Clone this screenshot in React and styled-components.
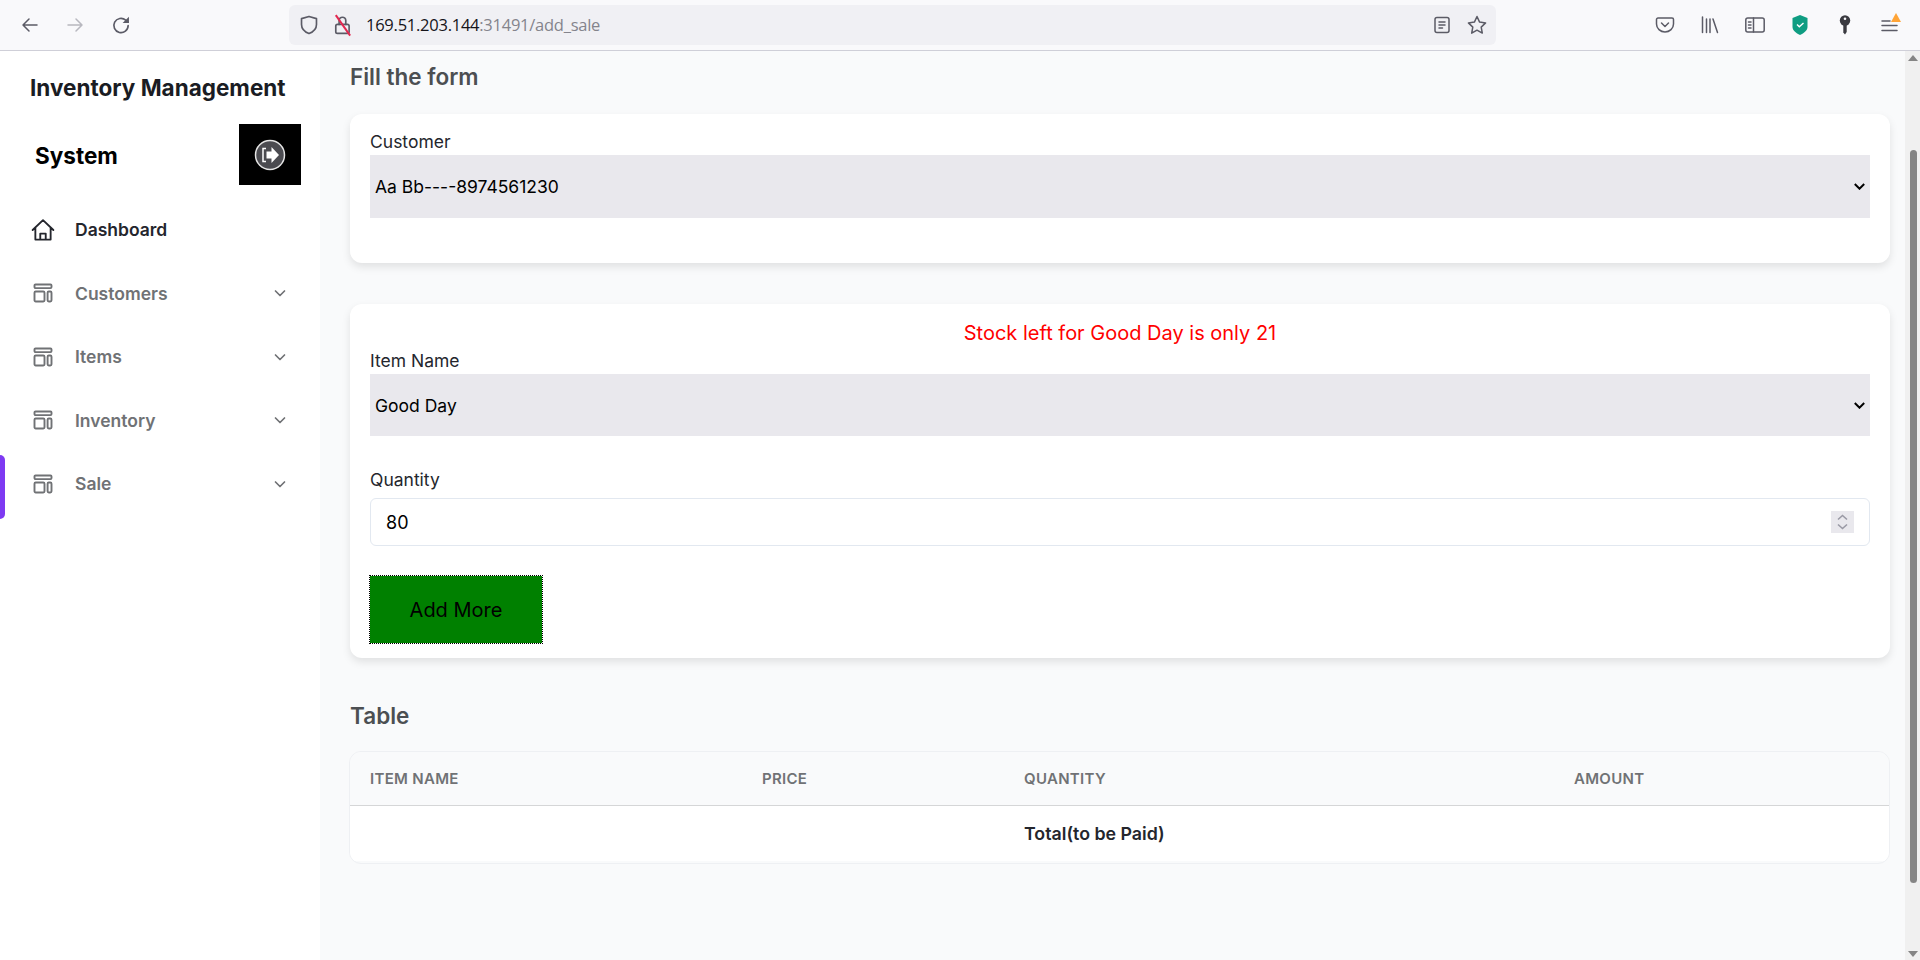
import React from 'react'
import styled, { createGlobalStyle } from 'styled-components'

const GlobalStyle = createGlobalStyle`
  html, body { margin: 0; padding: 0; height: 100%; overflow: hidden; }
  body { font-family: Inter, "Liberation Sans", sans-serif; background: #f9fafb; }
  * { box-sizing: border-box; }
`

function Ico({ size = 20, children, vb = '0 0 20 20', color = '#5b5b66', sw = 1.5 }) {
  return (
    <svg width={size} height={size} viewBox={vb} fill="none" stroke={color} strokeWidth={sw} strokeLinecap="round" strokeLinejoin="round">
      {children}
    </svg>
  )
}

function LayoutIcon() {
  return (
    <svg width="20" height="20" viewBox="0 0 20 20" fill="none" stroke="#707275" strokeWidth="1.9">
      <rect x="1.5" y="1.5" width="17" height="3.6" rx="1" />
      <rect x="1.5" y="8.5" width="10" height="10" rx="1.2" />
      <rect x="14.6" y="8.5" width="3.9" height="10" rx="1.2" />
    </svg>
  )
}

function Chevron() {
  return (
    <svg width="16" height="16" viewBox="0 0 16 16" fill="none" stroke="#707275" strokeWidth="1.7" strokeLinecap="round" strokeLinejoin="round">
      <path d="M3.5 6l4.5 4.5L12.5 6" />
    </svg>
  )
}

function SelectCaret() {
  return (
    <svg width="11" height="7" viewBox="0 0 11 7" fill="none" stroke="#000" strokeWidth="2">
      <path d="M.8 1l4.700 4.700L10.200 1" />
    </svg>
  )
}

const navItems = ['Customers', 'Items', 'Inventory', 'Sale']
const columns = [
  { label: 'ITEM NAME', w: 392 },
  { label: 'PRICE', w: 262 },
  { label: 'QUANTITY', w: 550 },
  { label: 'AMOUNT', w: 336 },
]

export default function App() {
  return (
    <Page>
      <GlobalStyle />
      <Toolbar>
        <NavButtons>
          <Ico size={20}><path d="M17 10H3.5M9 4l-6 6 6 6" /></Ico>
          <Ico size={20} color="#b8b8bf"><path d="M3 10h13.5M11 4l6 6-6 6" /></Ico>
          <Ico size={22} vb="0 0 20 20"><path d="M16.500 10.500a6.500 6.500 0 1 1-2.200-4.900L16.500 7.500" /><path d="M17.200 2.500v5.700h-5.700" fill="#5b5b66" stroke="none" /></Ico>
        </NavButtons>
        <UrlBar>
          <Ico size={22} vb="0 0 20 20"><path d="M10 2.200l6.800 2v5.300c0 4-3 6.800-6.800 8.300-3.800-1.500-6.800-4.300-6.800-8.300V4.200z" /></Ico>
          <LockWrap>
            <Ico size={20} vb="0 0 18 18"><rect x="2.500" y="8.500" width="12" height="8" rx="1.500" /><path d="M5.500 8.500V5a3 3 0 0 1 6 0v3.500" /></Ico>
            <Slash />
          </LockWrap>
          <UrlText>169.51.203.144<UrlDim>:31491/add_sale</UrlDim></UrlText>
          <UrlEnd>
            <Ico size={18} vb="0 0 18 18"><rect x="2" y="1.500" width="14" height="15" rx="2" /><path d="M6 6h6M6 9h6M6 12h3.500" /></Ico>
            <Ico size={22} vb="0 0 22 22"><path d="M11 2.500l2.600 5.600 6 .8-4.400 4.200 1.100 6L11 16.200 5.700 19.100l1.100-6L2.400 8.900l6-.8z" /></Ico>
          </UrlEnd>
        </UrlBar>
        <ToolIcons>
          <ToolSlot><Ico size={20}><path d="M3 3h14a1.500 1.500 0 0 1 1.500 1.500V9a8.500 8 0 0 1-17 0V4.500A1.500 1.500 0 0 1 3 3z" /><path d="M6.500 8l3.500 3.500L13.500 8" /></Ico></ToolSlot>
          <ToolSlot><Ico size={20}><path d="M2.500 2v15.500M6.500 4v13.500M10 4v13.500M13 4l4.500 13.500" /></Ico></ToolSlot>
          <ToolSlot><Ico size={20}><rect x=".8" y="3" width="18.400" height="14" rx="2" /><path d="M8.500 3v14M3.500 7h2.500M3.500 10h2.500M3.500 13h2.500" /></Ico></ToolSlot>
          <ToolSlot>
            <svg width="16" height="20" viewBox="0 0 16 20">
              <path d="M8 0l7.500 3v9c0 3.500-3.500 6-7.500 8-4-2-7.500-4.500-7.500-8V3z" fill="#0f9d82" />
              <path d="M5 9.500l2.300 2.200L11.500 8" fill="none" stroke="#fff" strokeWidth="1.400" />
            </svg>
          </ToolSlot>
          <ToolSlot>
            <svg width="12" height="20" viewBox="0 0 12 20">
              <circle cx="6" cy="5.500" r="5.200" fill="#3a3a40" />
              <circle cx="6" cy="3.800" r="1.300" fill="#f9f9fb" />
              <path d="M4.300 9h3.400v8L6 19.500 4.300 17.500z" fill="#3a3a40" />
            </svg>
          </ToolSlot>
          <ToolSlot>
            <MenuWrap>
              <Ico size={20} color="#5b5b66"><path d="M2 6h8M2 10.500h15M2 15.500h15" /></Ico>
              <MenuBadge />
            </MenuWrap>
          </ToolSlot>
        </ToolIcons>
      </Toolbar>

      <Body>
        <Sidebar>
          <Brand>Inventory Management</Brand>
          <BrandRow>
            <BrandSub>System</BrandSub>
            <LogoutBox>
              <svg width="32" height="32" viewBox="0 0 32 32">
                <circle cx="16" cy="16" r="14.500" fill="#4b4b50" stroke="#e5e5e5" strokeWidth="1.500" />
                <path d="M12 9.500H9v13h3" fill="none" stroke="#fff" strokeWidth="1.500" />
                <path d="M12.500 12.500h5V8l7.500 8-7.500 8v-4.500h-5z" fill="#fff" />
              </svg>
            </LogoutBox>
          </BrandRow>
          <NavList>
            <NavRow $dark>
              <Ico size={24} vb="0 0 22 22" color="#24262d" sw={1.7}>
                <path d="M1.500 11L11 2l9.500 9M4 8.800v11h14v-11M8.500 19.800v-5.500h5v5.500" />
              </Ico>
              <NavLabel $dark>Dashboard</NavLabel>
            </NavRow>
            {navItems.map((name, i) => (
              <NavRow key={name}>
                {i === navItems.length - 1 && <ActiveBar />}
                <LayoutIcon />
                <NavLabel>{name}</NavLabel>
                <ChevronSlot><Chevron /></ChevronSlot>
              </NavRow>
            ))}
          </NavList>
        </Sidebar>

        <Main>
          <Heading>Fill the form</Heading>
          <CustomerCard>
            <Label>Customer</Label>
            <FakeSelect>
              Aa Bb----8974561230
              <CaretSlot><SelectCaret /></CaretSlot>
            </FakeSelect>
          </CustomerCard>

          <ItemCard>
            <StockNote>Stock left for Good Day is only 21</StockNote>
            <ItemLabel>Item Name</ItemLabel>
            <FakeSelect $short>
              Good Day
              <CaretSlot><SelectCaret /></CaretSlot>
            </FakeSelect>
            <QuantityLabel>Quantity</QuantityLabel>
            <NumberField>
              80
              <Spinner>
                <svg width="13" height="18" viewBox="0 0 13 18" fill="none" stroke="#9a9aa5" strokeWidth="1.600">
                  <path d="M2 6.500L6.500 2.500 11 6.500M2 11.500l4.500 4 4.500-4" />
                </svg>
              </Spinner>
            </NumberField>
            <AddButton>Add More</AddButton>
          </ItemCard>

          <TableHeading>Table</TableHeading>
          <TableWrap>
            <HeadRow>
              {columns.map(c => <HeadCell key={c.label} style={{ width: c.w }}>{c.label}</HeadCell>)}
            </HeadRow>
            <TotalRow>
              <TotalSpacer />
              <TotalText>Total(to be Paid)</TotalText>
            </TotalRow>
          </TableWrap>
        </Main>

        <ScrollBar>
          <ScrollArrow $up />
          <ScrollThumb />
          <ScrollArrow $down />
        </ScrollBar>
      </Body>
    </Page>
  )
}

const Page = styled.div`
  width: 1920px;
  height: 960px;
  display: flex;
  flex-direction: column;
  overflow: hidden;
`

const Toolbar = styled.div`
  height: 51px;
  flex: none;
  background: #f9f9fb;
  border-bottom: 1px solid #cfcfd8;
  display: flex;
  align-items: center;
`

const NavButtons = styled.div`
  width: 289px;
  padding-left: 20px;
  display: flex;
  align-items: center;
  gap: 25px;
  flex: none;
`

const UrlBar = styled.div`
  width: 1207px;
  height: 40px;
  margin-top: -1px;
  flex: none;
  background: #f0f0f4;
  border-radius: 6px;
  display: flex;
  align-items: center;
  padding: 0 8px 0 9px;
`

const LockWrap = styled.div`
  position: relative;
  display: flex;
  margin-left: 13px;
  margin-right: 13px;
`

const Slash = styled.div`
  position: absolute;
  left: 9px;
  top: -2px;
  width: 1.5px;
  height: 25px;
  background: #e22850;
  transform: rotate(-35deg);
`

const UrlText = styled.div`
  font-family: "Open Sans", "Liberation Sans", sans-serif;
  font-size: 16.5px;
  letter-spacing: -0.25px;
  color: #15141a;
`

const UrlDim = styled.span`
  color: #84848c;
`

const UrlEnd = styled.div`
  margin-left: auto;
  display: flex;
  align-items: center;
  gap: 15px;
`

const ToolIcons = styled.div`
  margin-left: 146px;
  display: flex;
  align-items: center;
`

const ToolSlot = styled.div`
  width: 45px;
  display: flex;
  justify-content: center;
`

const MenuWrap = styled.div`
  position: relative;
  display: flex;
`

const MenuBadge = styled.div`
  position: absolute;
  right: -1px;
  top: -2px;
  width: 0;
  height: 0;
  border-left: 5px solid transparent;
  border-right: 5px solid transparent;
  border-bottom: 9px solid #ffa436;
`

const Body = styled.div`
  flex: 1;
  display: flex;
  min-height: 0;
`

const Sidebar = styled.aside`
  width: 320px;
  flex: none;
  background: #fff;
  padding-top: 18px;
`

const Brand = styled.div`
  font-size: 22.5px;
  font-weight: 700;
  line-height: 38px;
  color: #1a1c23;
  padding-left: 30px;
  white-space: nowrap;
`

const BrandRow = styled.div`
  display: flex;
  align-items: center;
  justify-content: space-between;
  padding: 0 19px 0 35px;
  margin-top: 17px;
`

const BrandSub = styled.div`
  font-size: 22.5px;
  font-weight: 700;
  color: #000;
  padding-top: 2px;
`

const LogoutBox = styled.div`
  width: 62px;
  height: 61px;
  background: #000;
  display: flex;
  align-items: center;
  justify-content: center;
`

const NavList = styled.nav`
  margin-top: 13px;
`

const NavRow = styled.div`
  position: relative;
  height: 63.5px;
  display: flex;
  align-items: center;
  padding: 0 32px 0 33px;
  ${p => p.$dark && 'padding-left: 31px;'}
`

const NavLabel = styled.span`
  font-size: 17.5px;
  font-weight: 600;
  margin-left: ${p => (p.$dark ? '20px' : '22px')};
  color: ${p => (p.$dark ? '#24262d' : '#707275')};
`

const ChevronSlot = styled.span`
  margin-left: auto;
  display: flex;
`

const ActiveBar = styled.span`
  position: absolute;
  left: 0;
  top: 3px;
  width: 5px;
  height: 100%;
  background: #7e3af2;
  border-radius: 0 8px 8px 0;
`

const Main = styled.main`
  flex: 1;
  min-width: 0;
  padding: 0 15px 0 30px;
  background: #f9fafb;
`

const Heading = styled.h2`
  margin: 0;
  padding-top: 10px;
  font-size: 22.5px;
  font-weight: 600;
  line-height: 32px;
  color: #4c4f52;
`

const CustomerCard = styled.section`
  background: #fff;
  border-radius: 12px;
  box-shadow: 0 4px 8px rgba(0, 0, 0, 0.1);
  padding: 15px 20px 0;
  height: 149px;
  margin-top: 21px;
`

const ItemCard = styled(CustomerCard)`
  height: 354px;
  margin-top: 41px;
  padding-top: 17px;
`

const Label = styled.div`
  font-size: 17.5px;
  line-height: 26px;
  color: #24262d;
`

const ItemLabel = styled(Label)`
  margin-top: 3px;
`

const FakeSelect = styled.div`
  height: ${p => (p.$short ? '62px' : '63px')};
  background: #e9e8ed;
  display: flex;
  align-items: center;
  padding: 0 5px;
  font-size: 17.5px;
  color: #000;
`

const CaretSlot = styled.span`
  margin-left: auto;
  display: flex;
`

const StockNote = styled.div`
  font-size: 20px;
  line-height: 24px;
  text-align: center;
  color: #f00;
`

const QuantityLabel = styled(Label)`
  margin-top: 31px;
  margin-bottom: 5px;
`

const NumberField = styled.div`
  height: 48px;
  border: 1px solid #e2e8f0;
  border-radius: 6px;
  display: flex;
  align-items: center;
  padding: 0 15px;
  font-size: 18px;
  color: #000;
`

const Spinner = styled.span`
  margin-left: auto;
  width: 23px;
  height: 22px;
  background: #e9e8ed;
  display: flex;
  align-items: center;
  justify-content: center;
`

const AddButton = styled.button`
  display: block;
  width: 174px;
  height: 69px;
  margin: 29px 0 0 -1px;
  background: #008000;
  background-clip: padding-box;
  border: 1px dotted #000;
  font-family: inherit;
  font-size: 20px;
  color: #000;
`

const TableHeading = styled(Heading)`
  margin-top: 32px;
`

const TableWrap = styled.div`
  margin: 19px 0 0 -1px;
  height: 113px;
  border: 1px solid #eef0f3;
  border-radius: 12px;
  overflow: hidden;
`

const HeadRow = styled.div`
  height: 54px;
  display: flex;
  align-items: center;
  background: #f9fafb;
  border-bottom: 1px solid #d5d6d7;
`

const HeadCell = styled.div`
  padding-left: 20px;
  font-size: 15px;
  font-weight: 600;
  letter-spacing: 0.3px;
  color: #707275;
  flex: none;
`

const TotalRow = styled.div`
  height: 55px;
  background: #fff;
  display: flex;
  align-items: center;
`

const TotalSpacer = styled.div`
  width: 654px;
  flex: none;
`

const TotalText = styled.div`
  padding-left: 20px;
  font-size: 17.8px;
  font-weight: 600;
  color: #24262d;
`

const ScrollBar = styled.div`
  width: 15px;
  flex: none;
  background: #f0f0f0;
  display: flex;
  flex-direction: column;
  align-items: center;
  padding: 4px 0 3px;
`

const ScrollThumb = styled.div`
  width: 7px;
  height: 733px;
  margin: 89px 0 0 1px;
  background: #858585;
  border-radius: 4px;
`

const ScrollArrow = styled.div`
  width: 0;
  height: 0;
  border-left: 5px solid transparent;
  border-right: 5px solid transparent;
  ${p => (p.$up ? 'border-bottom: 6px solid #858585;' : 'border-top: 6px solid #858585;')}
  ${p => p.$down && 'margin-top: auto;'}
`
